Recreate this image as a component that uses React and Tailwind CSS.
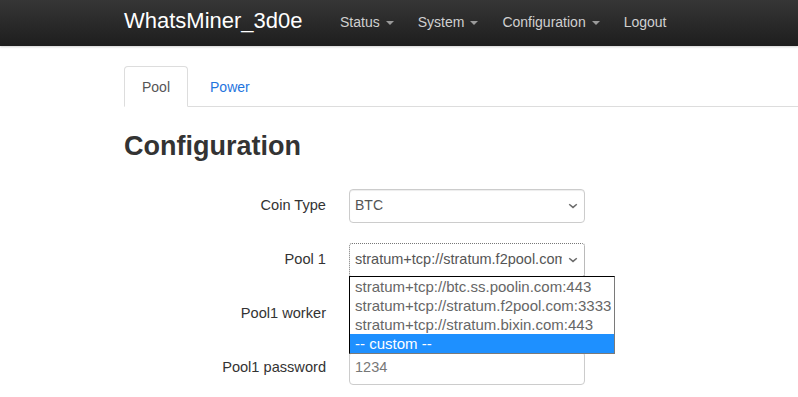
import React from "react";

function Caret() {
  return (
    <span className="ml-[6px] inline-block w-0 h-0 border-t-[4px] border-t-[#9a9a9a] border-x-[4px] border-x-transparent align-middle" />
  );
}

function Chevron() {
  return (
    <svg width="10" height="6" viewBox="0 0 10 6" className="shrink-0">
      <path d="M1.2 1.2 L5 4.4 L8.8 1.2" fill="none" stroke="#6b6b6b" strokeWidth="1.5" />
    </svg>
  );
}

function Label({ children }) {
  return (
    <div className="h-[34px] flex items-center justify-end text-[14.6px] text-[#333]">
      {children}
    </div>
  );
}

export default function App() {
  return (
    <div className="w-[798px] h-[397px] overflow-hidden bg-white font-['Liberation_Sans',Arial,sans-serif]">
      {/* Navbar */}
      <div className="h-[46px] bg-gradient-to-b from-[#363636] to-[#1e1e1e] shadow-[0_1px_2px_rgba(0,0,0,0.18)] flex items-center pl-[124px] relative z-10">
        <div className="w-[204px] text-[22px] text-white leading-none -mt-[4px]">WhatsMiner_3d0e</div>
        <ul className="flex items-center text-[14px] text-[#d0d0d0] -mt-[1px]">
          <li className="px-[12px] flex items-center">Status<Caret /></li>
          <li className="px-[12px] flex items-center">System<Caret /></li>
          <li className="px-[12px] flex items-center">Configuration<Caret /></li>
          <li className="px-[12px] flex items-center">Logout</li>
        </ul>
      </div>

      <div className="pl-[124px]">
        {/* Tabs */}
        <ul className="mt-[20px] flex border-b border-[#ddd] text-[14px] leading-[20px]">
          <li className="-mb-px px-[17px] pt-[10px] pb-[9px] border border-[#ddd] border-b-transparent rounded-t-[4px] bg-white text-[#555]">
            Pool
          </li>
          <li className="-mb-px ml-[4px] px-[17px] pt-[10px] pb-[9px] border border-transparent text-[#1f75de]">
            Power
          </li>
        </ul>

        <h2 className="mt-[25px] text-[27px] leading-[1.1] font-bold text-[#333]">Configuration</h2>

        <div className="mt-[27px] grid grid-cols-[202px_236px] gap-x-[23px] gap-y-[20px]">
          <Label>Coin Type</Label>
          <div className="h-[34px] border border-[#ccc] rounded-[4px] shadow-[inset_0_1px_1px_rgba(0,0,0,0.075)] flex items-center pl-[5px] pr-[6px] text-[14px] text-[#555]">
            <span className="flex-1">BTC</span>
            <Chevron />
          </div>

          <Label>Pool 1</Label>
          <div className="relative">
            <div className="h-[34px] border border-dotted border-[#777] rounded-[3px] flex items-center pl-[5px] pr-[6px] text-[14.5px] text-[#555]">
              <span className="flex-1 overflow-hidden whitespace-nowrap mr-[6px]">stratum+tcp://stratum.f2pool.com:3333</span>
              <Chevron />
            </div>
            <div className="absolute left-0 top-[33px] w-[266px] bg-white border border-t-black border-l-black border-r-[#7a7a7a] border-b-[#7a7a7a] text-[15px] leading-[19px] text-[#666] z-20">
              <div className="h-[19px] pl-[5px] whitespace-nowrap">stratum+tcp://btc.ss.poolin.com:443</div>
              <div className="h-[19px] pl-[5px] whitespace-nowrap">stratum+tcp://stratum.f2pool.com:3333</div>
              <div className="h-[19px] pl-[5px] whitespace-nowrap">stratum+tcp://stratum.bixin.com:443</div>
              <div className="h-[19px] pl-[5px] whitespace-nowrap bg-[#1e90ff] text-white">-- custom --</div>
            </div>
          </div>

          <Label>Pool1 worker</Label>
          <div className="h-[34px] border border-[#ccc] rounded-[4px] flex items-center pl-[5px] text-[14px] text-[#555]"></div>

          <Label>Pool1 password</Label>
          <div className="h-[34px] border border-[#ccc] rounded-[4px] shadow-[inset_0_1px_1px_rgba(0,0,0,0.075)] flex items-center pl-[5px] text-[14.5px] text-[#777]">
            1234
          </div>
        </div>
      </div>
    </div>
  );
}
